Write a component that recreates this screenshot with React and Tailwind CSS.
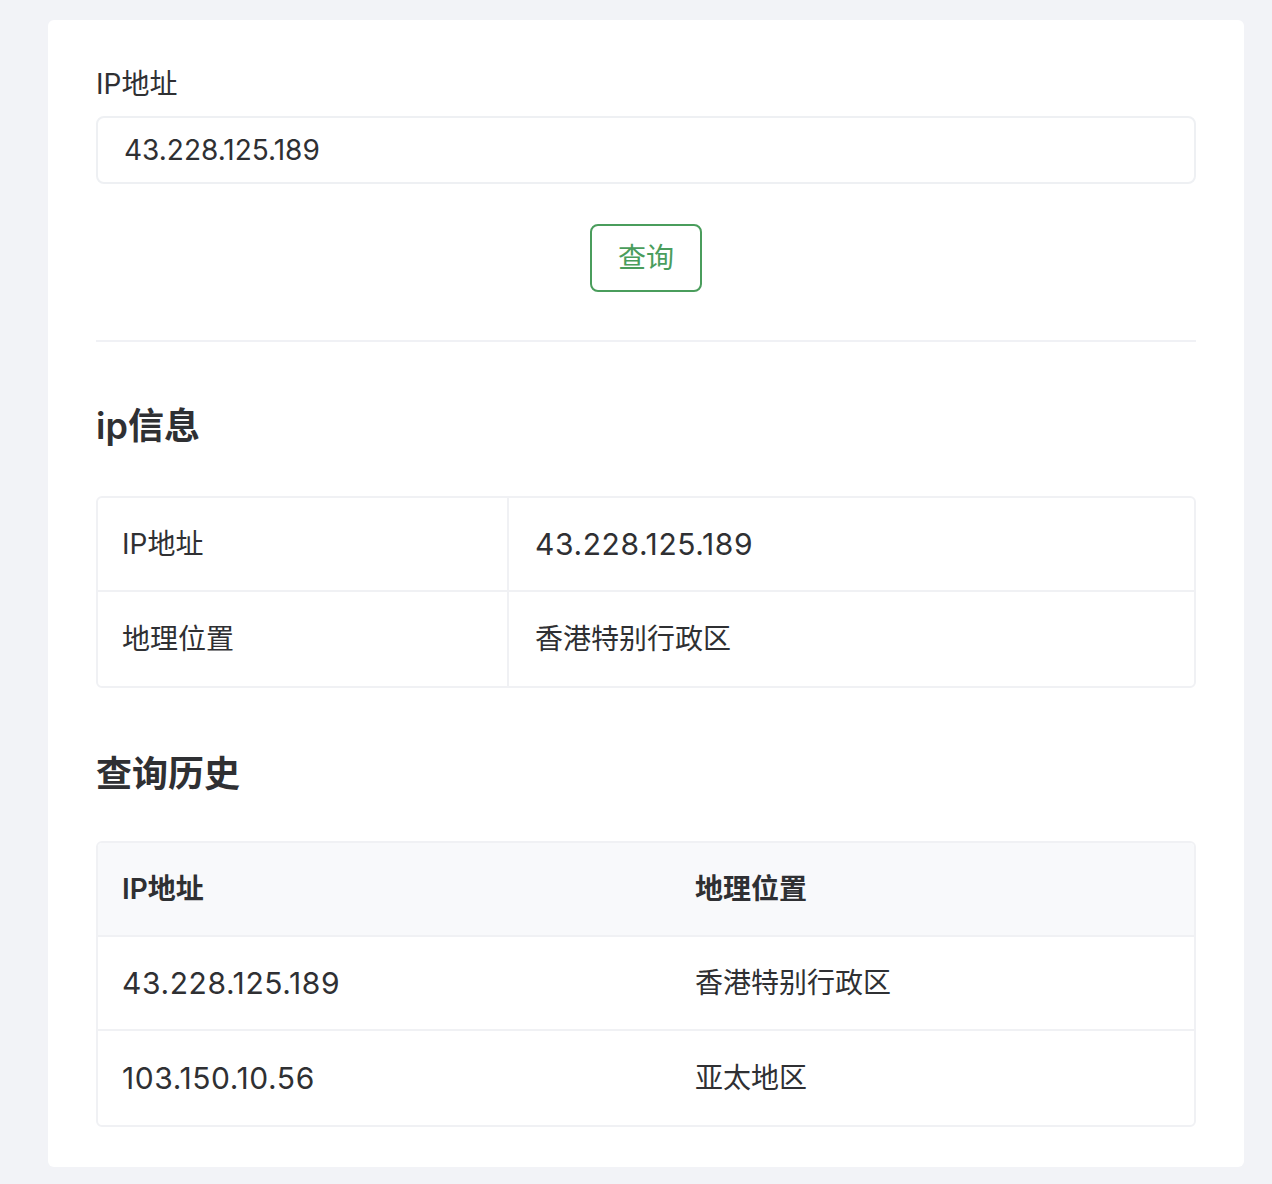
import { useState } from 'react';

const HISTORY = [
  { ip: '43.228.125.189', loc: '香港特别行政区' },
  { ip: '103.150.10.56', loc: '亚太地区' },
];

export default function App() {
  const [ip, setIp] = useState('43.228.125.189');

  return (
    <div
      className="min-h-screen bg-[#f2f3f7] pl-12 pr-7 pt-5 pb-[18px] text-[#2f3033]"
      style={{ fontFamily: 'Inter, "Noto Sans CJK SC", sans-serif' }}
    >
      <div className="bg-white rounded-md px-12 pt-12 pb-10">
        {/* 查询表单 */}
        <label className="block text-[28px] leading-8 mb-4">IP地址</label>
        <input
          value={ip}
          onChange={e => setIp(e.target.value)}
          className="block w-full h-[68px] px-[26px] border-2 border-[#eef0f3] rounded-lg text-[28px] outline-none"
        />
        <div className="flex justify-center mt-10">
          <button className="w-[112px] h-[68px] border-2 border-[#4a9d5c] rounded-lg text-[28px] text-[#4a9d5c]">
            查询
          </button>
        </div>
        <div className="h-[2px] bg-[#f0f1f5] mt-12" />

        {/* ip信息 */}
        <h2 className="text-[36px] leading-[48px] font-semibold mt-[60px]">ip信息</h2>
        <div className="mt-[46px] border-2 border-[#f0f1f4] rounded-md">
          <div className="flex h-[94px] border-b-2 border-[#f0f1f4]">
            <div className="w-[411px] flex items-center px-[24px] border-r-2 border-[#f0f1f4] text-[28px]">IP地址</div>
            <div className="flex-1 flex items-center px-[26px] text-[30px] tracking-[0.6px]">43.228.125.189</div>
          </div>
          <div className="flex h-[94px]">
            <div className="w-[411px] flex items-center px-[24px] border-r-2 border-[#f0f1f4] text-[28px]">地理位置</div>
            <div className="flex-1 flex items-center px-[26px] text-[28px]">香港特别行政区</div>
          </div>
        </div>

        {/* 查询历史 */}
        <h2 className="text-[36px] leading-[48px] font-semibold mt-[62px]">查询历史</h2>
        <div className="mt-[43px] border-2 border-[#f0f1f4] rounded-md overflow-hidden">
          <div className="flex h-[94px] bg-[#f8f9fb] border-b-2 border-[#f0f1f4] font-semibold text-[28px]">
            <div className="w-[573px] flex items-center px-[24px]">IP地址</div>
            <div className="flex-1 flex items-center px-[24px]">地理位置</div>
          </div>
          {HISTORY.map((h, i) => (
            <div
              key={h.ip}
              className={`flex h-[94px] ${i < HISTORY.length - 1 ? 'border-b-2 border-[#f0f1f4]' : ''}`}
            >
              <div className="w-[573px] flex items-center px-[24px] text-[30px] tracking-[0.6px]">{h.ip}</div>
              <div className="flex-1 flex items-center px-[24px] text-[28px]">{h.loc}</div>
            </div>
          ))}
        </div>
      </div>
    </div>
  );
}
